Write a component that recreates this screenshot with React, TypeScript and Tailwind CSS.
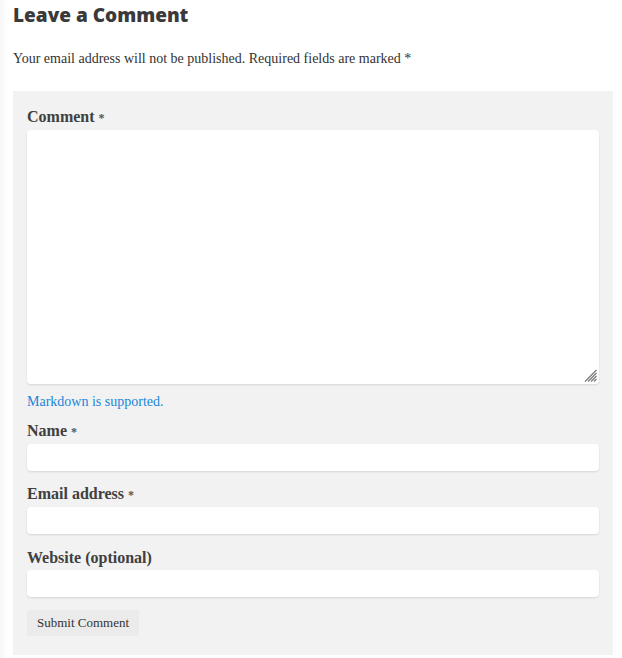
import React from "react";

const serif = { fontFamily: '"Liberation Serif", "DejaVu Serif", serif' };

function Label({ text, req }: { text: string; req?: boolean }) {
  return (
    <label className="block text-[16px] font-bold leading-[20px] text-[#404040]">
      {text}
      {req && <span className="ml-1 text-[12px] font-bold text-[#555]">*</span>}
    </label>
  );
}

function Field() {
  return (
    <input
      type="text"
      className="block h-[27px] w-full rounded-[4px] bg-white shadow-[0_1px_2px_rgba(0,0,0,0.12)] outline-none"
    />
  );
}

export default function App() {
  return (
    <div
      className="h-[658px] w-[622px] bg-white shadow-[inset_10px_0_10px_-10px_rgba(0,0,0,0.07)]"
      style={serif}
    >
      <div className="px-[13px]">
        <h2
          className="pt-[1px] text-[19px] font-extrabold leading-[28px] text-[#3a3a3a]"
          style={{ fontFamily: '"Open Sans", sans-serif' }}
        >
          Leave a Comment
        </h2>
        <p className="mt-[22px] text-[14px] leading-[16px] text-[#333]">
          Your email address will not be published. Required fields are marked *
        </p>
        <div className="mt-[24px] h-[564px] w-[600px] bg-[#f2f2f2] px-[14px] pt-[16px]">
          <Label text="Comment" req />
          <div className="relative mt-[2px]">
            <textarea className="block h-[254px] w-full resize-none rounded-[4px] bg-white shadow-[0_1px_2px_rgba(0,0,0,0.12)] outline-none" />
            <svg
              className="pointer-events-none absolute bottom-[2px] right-[2px]"
              width="13"
              height="13"
              viewBox="0 0 13 13"
            >
              <g stroke="#7a7a7a" strokeWidth="1.2">
                <line x1="1" y1="12.5" x2="12.5" y2="1" />
                <line x1="4" y1="12.5" x2="12.5" y2="4" />
                <line x1="7" y1="12.5" x2="12.5" y2="7" />
                <line x1="10" y1="12.5" x2="12.5" y2="10" />
              </g>
            </svg>
          </div>
          <p className="mt-[10px] text-[14px] leading-[16px] text-[#1a86d8]">Markdown is supported.</p>
          <div className="mt-[11px]">
            <Label text="Name" req />
          </div>
          <div className="mt-[2px]">
            <Field />
          </div>
          <div className="mt-[13px]">
            <Label text="Email address" req />
          </div>
          <div className="mt-[2px]">
            <Field />
          </div>
          <div className="mt-[14px]">
            <Label text="Website (optional)" />
          </div>
          <div className="mt-[2px]">
            <Field />
          </div>
          <button className="mt-[13px] h-[26px] rounded-[3px] bg-[#ebebeb] px-[10px] text-[13px] text-[#333]">
            Submit Comment
          </button>
        </div>
      </div>
    </div>
  );
}
